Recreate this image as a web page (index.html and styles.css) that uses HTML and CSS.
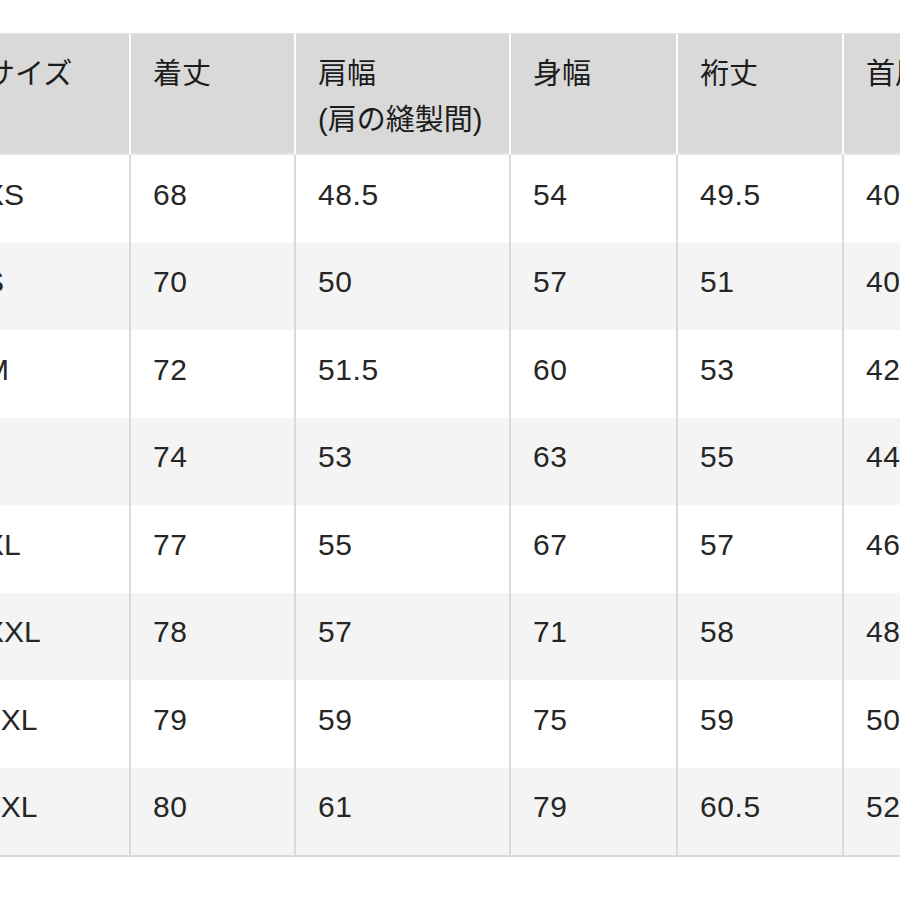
FILE: index.html
```html
<!DOCTYPE html>
<html lang="ja">
<head>
<meta charset="utf-8">
<title>サイズ表</title>
<link rel="stylesheet" href="styles.css">
</head>
<body>
<div class="sheet">
  <table class="size-table">
    <colgroup>
      <col class="c1"><col class="c2"><col class="c3"><col class="c4"><col class="c5"><col class="c6">
    </colgroup>
    <thead>
      <tr>
        <th>サイズ</th>
        <th>着丈</th>
        <th>肩幅<br>(肩の縫製間)</th>
        <th>身幅</th>
        <th>裄丈</th>
        <th>首周り</th>
      </tr>
    </thead>
    <tbody>
      <tr><td>XS</td><td>68</td><td>48.5</td><td>54</td><td>49.5</td><td>40</td></tr>
      <tr><td>S</td><td>70</td><td>50</td><td>57</td><td>51</td><td>40</td></tr>
      <tr><td>M</td><td>72</td><td>51.5</td><td>60</td><td>53</td><td>42</td></tr>
      <tr><td>L</td><td>74</td><td>53</td><td>63</td><td>55</td><td>44</td></tr>
      <tr><td>XL</td><td>77</td><td>55</td><td>67</td><td>57</td><td>46</td></tr>
      <tr><td>XXL</td><td>78</td><td>57</td><td>71</td><td>58</td><td>48</td></tr>
      <tr><td>3XL</td><td>79</td><td>59</td><td>75</td><td>59</td><td>50</td></tr>
      <tr><td>4XL</td><td>80</td><td>61</td><td>79</td><td>60.5</td><td>52</td></tr>
    </tbody>
  </table>
</div>
</body>
</html>
```

FILE: styles.css
```css
html, body {
  margin: 0;
  padding: 0;
  background: #ffffff;
  overflow: hidden;
}

.sheet {
  padding-top: 33px;
  margin-left: -39px;
}

.size-table {
  border-collapse: separate;
  border-spacing: 0;
  table-layout: fixed;
  width: 1100px;
  font-family: "Liberation Sans", "Noto Sans CJK JP", sans-serif;
  font-size: 30px;
  color: #262626;
  border-bottom: 2px solid #d9d9d9;
}

.c1 { width: 168px; }
.c2 { width: 165px; }
.c3 { width: 215px; }
.c4 { width: 167px; }
.c5 { width: 166px; }
.c6 { width: 219px; }

.size-table th {
  background: #d9d9d9;
  font-weight: normal;
  font-size: 29px;
  text-align: left;
  vertical-align: top;
  height: 122px;
  box-sizing: border-box;
  padding: 17px 0 0 22px;
  line-height: 46px;
  color: #1c1c1c;
  border-top: 1px solid #e4e4e4;
  border-bottom: 2px solid #e6e6e6;
  white-space: nowrap;
}

.size-table th + th {
  border-left: 2px solid #ffffff;
}

.size-table td {
  height: 87.5px;
  box-sizing: border-box;
  padding: 0 0 8px 22px;
  vertical-align: middle;
  line-height: 40px;
  letter-spacing: 0.6px;
  white-space: nowrap;
}

.size-table th:first-child {
  padding-left: 25px;
}

.size-table td:first-child {
  padding-left: 23px;
  letter-spacing: 0;
}

.size-table td + td {
  border-left: 2px solid #dadada;
}

.size-table tbody tr:nth-child(even) td {
  background: #f4f4f4;
}
```
